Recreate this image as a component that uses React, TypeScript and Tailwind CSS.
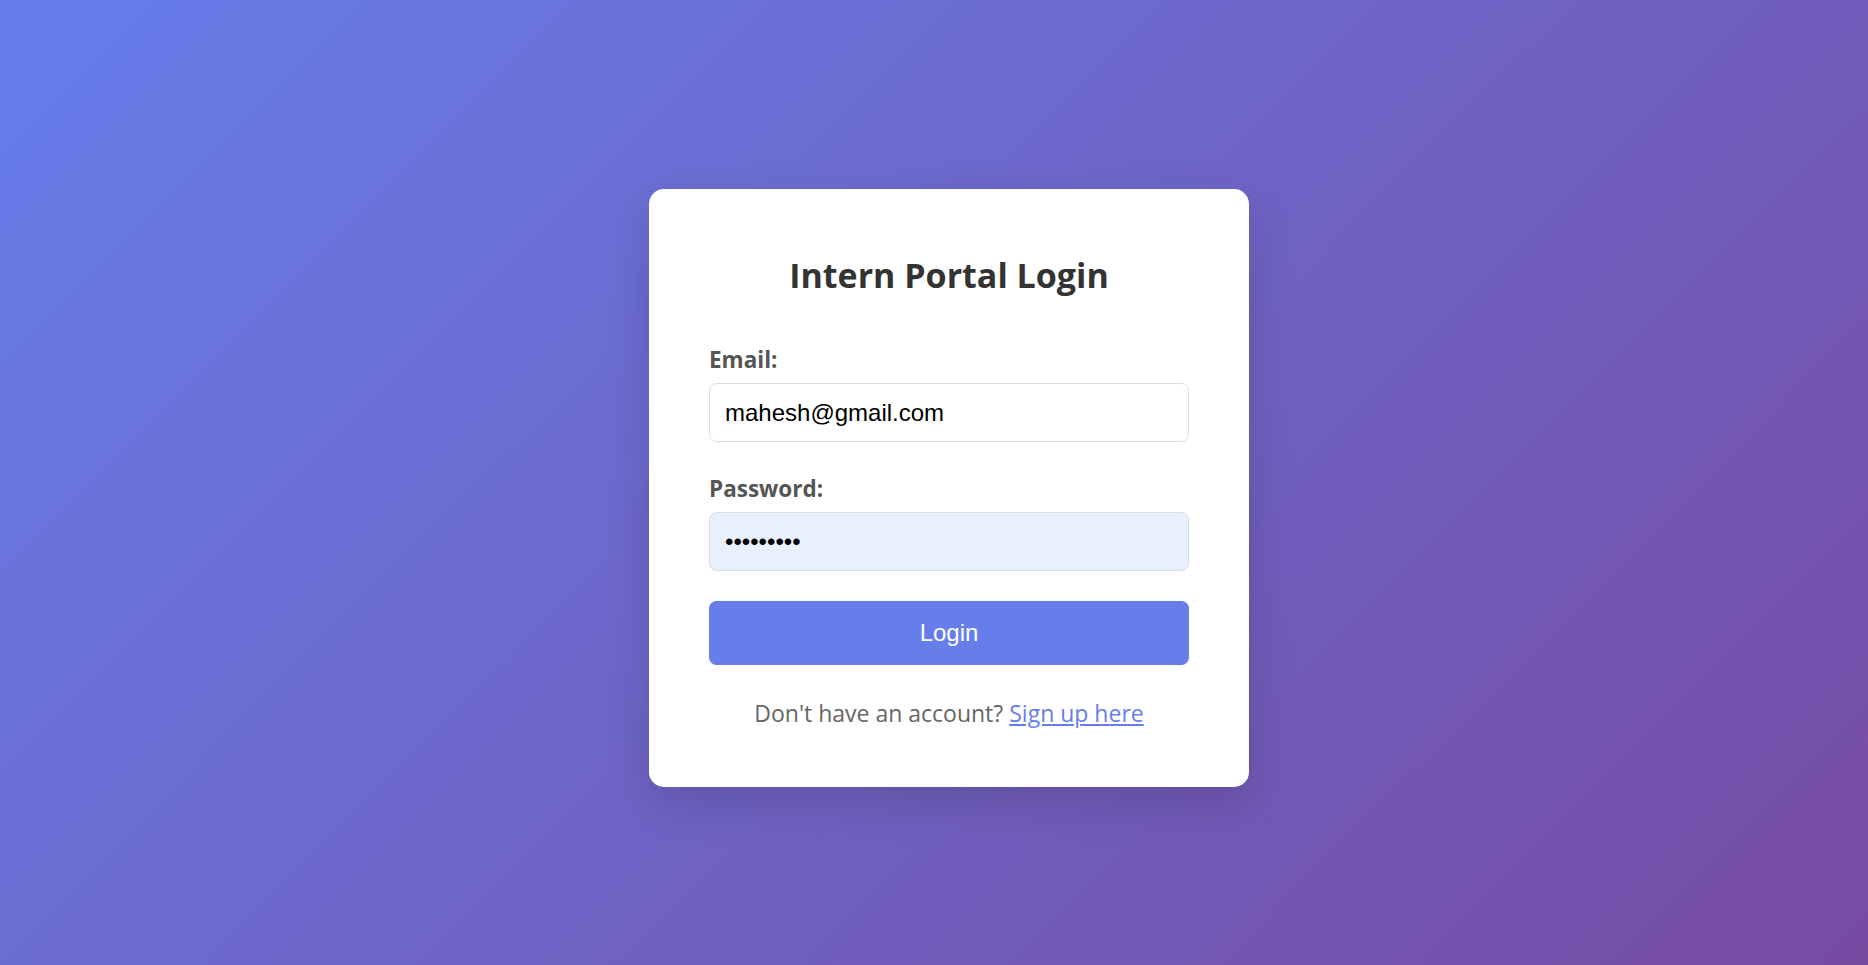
import React from "react";

const seg = { fontFamily: '"Open Sans", "Noto Sans", sans-serif' };
const arial = { fontFamily: '"Liberation Sans", Arial, sans-serif' };

export default function App() {
  return (
    <div
      className="h-screen w-full flex items-center justify-center pt-[11px] pl-[30px] bg-[linear-gradient(135deg,#667eea_0%,#764ba2_100%)]"
      style={seg}
    >
      <div className="w-[600px] bg-white rounded-[15px] p-[60px] shadow-[0_15px_45px_rgba(0,0,0,0.15)]">
        <h2 className="text-center text-[34px] leading-[48px] pt-[2px] font-bold text-[#333] mb-[44px]">
          Intern Portal Login
        </h2>
        <div className="mb-[30px]">
          <label className="block text-[22.5px] leading-[32px] pt-[1px] font-bold text-[#555] mb-[7px]">
            Email:
          </label>
          <input
            type="email"
            readOnly
            value="mahesh@gmail.com"
            className="block w-full h-[59px] px-[15px] border border-[#ddd] rounded-[7.5px] text-[24px] text-black bg-white outline-none"
            style={arial}
          />
        </div>
        <div className="mb-[30px]">
          <label className="block text-[22.5px] leading-[32px] pt-[1px] font-bold text-[#555] mb-[7px]">
            Password:
          </label>
          <input
            type="password"
            readOnly
            value="123456789"
            className="block w-full h-[59px] px-[15px] border border-[#ddd] rounded-[7.5px] text-[24px] text-black bg-[#e8f0fe] outline-none"
            style={arial}
          />
        </div>
        <button
          className="block w-full h-[64px] rounded-[7.5px] bg-[#667eea] text-white text-[24px] leading-[28px]"
          style={arial}
        >
          Login
        </button>
        <p className="mt-[32px] -mb-[2px] text-center text-[23px] leading-[32px] text-[#666]">
          Don't have an account?{" "}
          <a href="#" className="text-[#667eea] underline">
            Sign up here
          </a>
        </p>
      </div>
    </div>
  );
}
